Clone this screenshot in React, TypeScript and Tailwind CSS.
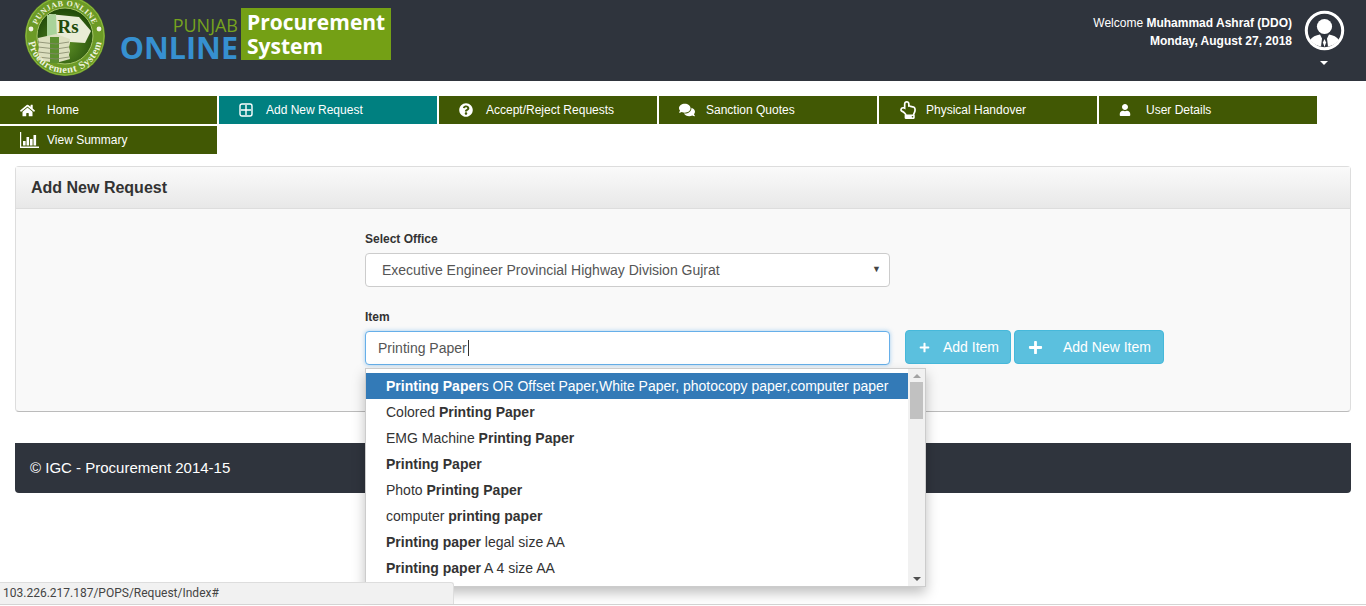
import { FaHome, FaQuestionCircle, FaComments, FaRegHandPointUp, FaUser, FaPlus } from "react-icons/fa";

const ChartIcon = () => (
  <svg width="20" height="16" viewBox="0 0 20 16" fill="white">
    <path d="M0 0h1.2v14.6H19V16H0z" />
    <rect x="3" y="9" width="2.6" height="4.5" />
    <rect x="6.5" y="5" width="2.6" height="8.5" />
    <rect x="10" y="7" width="2.6" height="6.5" />
    <rect x="13.5" y="3" width="2.6" height="10.5" />
  </svg>
);

const AddIcon = () => (
  <svg width="14" height="14" viewBox="0 0 14 14" fill="none" stroke="white" strokeWidth="1.4">
    <rect x="1" y="1" width="12" height="12" rx="2" />
    <path d="M7 2v10M2 7h10" />
  </svg>
);

// round badge: ring with lettering, stack of notes in the middle
const Logo = () => (
  <svg width="84" height="81" viewBox="0 0 84 81" className="shrink-0">
    <defs>
      <path id="ringTop" d="M12 36a30 30 0 0 1 60 0" />
      <path id="ringBottom" d="M5 36a37 37 0 0 0 74 0" />
      <radialGradient id="centre" cx="50%" cy="65%" r="60%">
        <stop offset="0%" stopColor="#5d8f26" />
        <stop offset="100%" stopColor="#234d0a" />
      </radialGradient>
    </defs>
    <circle cx="42" cy="36" r="40" fill="#6c9a26" />
    <circle cx="42" cy="36" r="39" fill="none" stroke="#8db940" strokeWidth="1" />
    <circle cx="42" cy="36" r="28" fill="url(#centre)" stroke="#a7c56a" strokeWidth="1" />
    <circle cx="8" cy="29" r="2.400" fill="#f3f3e5" />
    <circle cx="76" cy="29" r="2.400" fill="#f3f3e5" />
    <path d="M26 14l30 3 12 14-6 12-30-2z" fill="#e9ecd6" />
    <path d="M24 15l9-1 1 25-10 1z" fill="#a9d39a" />
    <path d="M15 38l18-4 14 5v4l-1 4 1 4-1 4 1 4-14 4-18-3 1-4-1-4 1-5z" fill="#dcdfbf" />
    <rect x="27" y="37" width="9" height="26" fill="#5c8f2f" />
    <path d="M15 42l18 2 13-2M15 47l18 2 13-2M15 52l18 2 13-2M15 57l18 2 13-2" stroke="#83866a" strokeWidth="0.8" fill="none" />
    <text x="45" y="33" fontFamily="'Liberation Serif', serif" fontSize="19" fontWeight="700" fill="#214a0a" textAnchor="middle">Rs</text>
    <text fontFamily="'Liberation Serif', serif" fontSize="8" fontWeight="700" fill="#eef3dc" letterSpacing="0.5">
      <textPath href="#ringTop" startOffset="50%" textAnchor="middle">PUNJAB ONLINE</textPath>
    </text>
    <text fontFamily="'Liberation Serif', serif" fontSize="10.500" fontWeight="700" fill="#eef3dc" letterSpacing="0.6">
      <textPath href="#ringBottom" startOffset="50%" textAnchor="middle">Procurement System</textPath>
    </text>
  </svg>
);

const Avatar = () => (
  <svg width="42" height="42" viewBox="0 0 42 42">
    <circle cx="21.5" cy="21.5" r="18.2" fill="none" stroke="white" strokeWidth="3" />
    <circle cx="21.5" cy="17.500" r="7.600" fill="white" />
    <path d="M7 31c2-3 6-5 10-5.500l2 4-1 8c-4-.5-8-3-11-6.500zM36 31c-2-3-6-5-10-5.500l-2 4 1 8c4-.5 8-3 11-6.500z" fill="white" />
    <path d="M21.500 30l-1.600 3.500 1.600 4.500 1.600-4.500z" fill="white" />
  </svg>
);

const navItems = [
  { label: "Home", icon: <FaHome size={15} />, w: "w-[217px]" },
  { label: "Add New Request", icon: <AddIcon />, w: "w-[218px]", active: true },
  { label: "Accept/Reject Requests", icon: <FaQuestionCircle size={14} />, w: "w-[218px]" },
  { label: "Sanction Quotes", icon: <FaComments size={16} />, w: "w-[218px]" },
  { label: "Physical Handover", icon: <FaRegHandPointUp size={18} />, w: "w-[218px]" },
  { label: "User Details", icon: <FaUser size={12} />, w: "w-[218px]" },
  { label: "View Summary", icon: <ChartIcon />, w: "w-[217px]" },
];

const suggestions = [
  { parts: [["b", "Printing Paper"], ["", "s OR Offset Paper,White Paper, photocopy paper,computer paper"]], active: true },
  { parts: [["", "Colored "], ["b", "Printing Paper"]] },
  { parts: [["", "EMG Machine "], ["b", "Printing Paper"]] },
  { parts: [["b", "Printing Paper"]] },
  { parts: [["", "Photo "], ["b", "Printing Paper"]] },
  { parts: [["", "computer "], ["b", "printing paper"]] },
  { parts: [["b", "Printing paper"], ["", " legal size AA"]] },
  { parts: [["b", "Printing paper"], ["", " A 4 size AA"]] },
];

export default function App() {
  return (
    <div className="relative h-[606px] overflow-hidden bg-white font-['Liberation_Sans',Arial,sans-serif] text-[14px] text-[#333]">
      <header className="flex h-[81px] items-start justify-between overflow-hidden bg-[#2f343d] pl-[23px] pr-[21px]">
        <div className="flex items-start">
          <Logo />
          <div className="ml-[14px] mt-[8px] flex items-start">
            <div className="flex w-[117px] flex-col items-end font-['Open_Sans',sans-serif]">
              <span className="mt-[7px] h-[20px] text-[18px] leading-[20px] text-[#76a21e]">PUNJAB</span>
              <span className="h-[24px] text-[30.5px] font-bold leading-[24px] text-[#3690d0]">ONLINE</span>
            </div>
            <div className="ml-[3px] flex h-[52px] w-[150px] flex-col justify-center bg-[#74a015] pl-[6px] font-['Open_Sans',sans-serif] text-[21px] font-bold leading-[24px] text-white">
              <span>Procurement</span>
              <span>System</span>
            </div>
          </div>
        </div>
        <div className="flex items-start">
          <div className="mt-[14px] text-right text-[12px] leading-[18px] text-white">
            <div>Welcome <span className="font-semibold">Muhammad Ashraf (DDO)</span></div>
            <div className="font-bold">Monday, August 27, 2018</div>
          </div>
          <div className="ml-[11px] flex w-[42px] flex-col items-center pt-[9px]">
            <Avatar />
            <div className="mt-[10px] h-0 w-0 border-x-[4px] border-t-[4px] border-x-transparent border-t-white" />
          </div>
        </div>
      </header>

      <nav className="mt-[15px] flex w-[1330px] flex-wrap gap-[2px]">
        {navItems.map((item) => (
          <div
            key={item.label}
            className={`flex h-[28px] items-center text-[12px] text-white ${item.w} ${item.active ? "bg-[#008080]" : "bg-[#415804]"}`}
          >
            <span className="flex w-[47px] shrink-0 justify-start pl-[20px]">{item.icon}</span>
            <span>{item.label}</span>
          </div>
        ))}
      </nav>

      <section className="mx-[15px] mt-[12px] h-[246px] rounded-[4px] border border-[#ddd] border-b-[#bbb] bg-[#f9f9f9]">
        <div className="flex h-[42px] items-center border-b border-[#ddd] bg-gradient-to-b from-[#fafafa] to-[#e8e8e8] pl-[15px] text-[16px] font-bold text-[#333]">
          Add New Request
        </div>
        <div className="pl-[349px] pt-[23px]">
          <label className="block text-[12px] font-bold leading-[14px]">Select Office</label>
          <div className="mt-[7px] flex h-[34px] w-[525px] items-center justify-between rounded-[4px] border border-[#ccc] bg-white pl-[16px] pr-[8px] text-[#555]">
            <span>Executive Engineer Provincial Highway Division Gujrat</span>
            <span className="text-[9px] text-[#444]">▼</span>
          </div>
          <label className="mt-[23px] block text-[12px] font-bold leading-[14px]">Item</label>
          <div className="relative mt-[7px] flex items-start">
            <div className="flex h-[34px] w-[525px] items-center rounded-[4px] border border-[#66afe9] bg-white pl-[12px] text-[#555] shadow-[0_0_4px_rgba(102,175,233,0.6)]">
              Printing Paper
              <span className="ml-px h-[16px] w-px bg-[#333]" />
            </div>
            <button className="-mt-px ml-[15px] flex h-[34px] w-[106px] items-center rounded-[4px] border border-[#46b8da] bg-[#5bc0de] pl-[13px] text-white">
              <FaPlus size={11} />
              <span className="ml-[13px]">Add Item</span>
            </button>
            <button className="-mt-px ml-[3px] flex h-[34px] w-[150px] items-center rounded-[4px] border border-[#46b8da] bg-[#5bc0de] pl-[13px] text-white">
              <FaPlus size={15} />
              <span className="ml-[20px]">Add New Item</span>
            </button>
            <div className="absolute left-0 top-[37px] z-10 flex h-[219px] w-[561px] overflow-hidden border border-[#ccc] bg-white shadow-[0_6px_12px_rgba(0,0,0,0.25)]">
              <ul className="flex-1 pt-[4px]">
                {suggestions.map((s, i) => (
                  <li
                    key={i}
                    className={`h-[26px] whitespace-pre pl-[20px] leading-[26px] ${s.active ? "bg-[#337ab7] text-white" : "text-[#333]"}`}
                  >
                    {s.parts.map(([kind, text], j) =>
                      kind === "b" ? <strong key={j}>{text}</strong> : <span key={j}>{text}</span>
                    )}
                  </li>
                ))}
              </ul>
              <div className="flex w-[17px] flex-col items-center justify-between bg-[#f1f1f1] pb-[5px] pt-[5px]">
                <div className="flex flex-col items-center">
                  <div className="h-0 w-0 border-x-[4px] border-b-[4px] border-x-transparent border-b-[#a3a3a3]" />
                  <div className="mt-[4px] h-[37px] w-[13px] bg-[#c1c1c1]" />
                </div>
                <div className="h-0 w-0 border-x-[4px] border-t-[4px] border-x-transparent border-t-[#505050]" />
              </div>
            </div>
          </div>
        </div>
      </section>

      <footer className="mx-[15px] mt-[31px] flex h-[50px] items-center rounded-b-[4px] bg-[#2f343d] pl-[15px] text-[15px] text-white">
        © IGC - Procurement 2014-15
      </footer>

      <div className="absolute bottom-[2px] left-0 z-20 h-[22px] w-[454px] rounded-tr-[3px] border-r border-t border-[#ddd] bg-[#f1f1f1] pl-[3px] font-['Roboto',sans-serif] text-[12px] leading-[21px] text-[#444]">
        103.226.217.187/POPS/Request/Index#
      </div>
      <div className="absolute bottom-[1px] left-0 h-px w-full bg-[#d4d4d4]" />
    </div>
  );
}
